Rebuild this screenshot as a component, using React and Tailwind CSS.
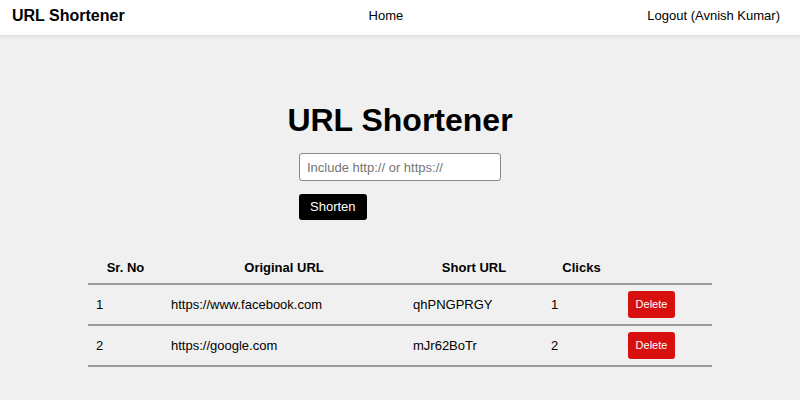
import React from 'react';

const links = [
  { id: 1, original: 'https://www.facebook.com', short: 'qhPNGPRGY', clicks: 1 },
  { id: 2, original: 'https://google.com', short: 'mJr62BoTr', clicks: 2 },
];

const App = () => {
  return (
    <div className="min-h-[400px] bg-[#f0f0f0] text-black font-['Liberation_Sans',Arial,sans-serif]">
      <nav className="h-[35px] bg-white shadow-[0_1px_4px_rgba(0,0,0,0.12)] flex items-center justify-between pl-3 pr-5 pb-1">
        <div className="text-[16px] font-bold">URL Shortener</div>
        <a className="text-[13px] text-black">Home</a>
        <a className="text-[13px] text-black">Logout (Avnish Kumar)</a>
      </nav>

      <main className="flex flex-col items-center">
        <h1 className="mt-[67px] text-[32px] leading-[37px] font-bold">URL Shortener</h1>

        <form className="mt-[14px] w-[202px] flex flex-col items-start" onSubmit={(e) => e.preventDefault()}>
          <input
            type="text"
            placeholder="Include http:// or https://"
            className="w-[202px] h-[28px] px-[7px] bg-white border border-[#8a8a8a] rounded-[3px] text-[13px] placeholder:text-[#757575] outline-none"
          />
          <button className="mt-[13px] h-[26px] px-[11px] bg-black text-white text-[13px] rounded-[3px]">
            Shorten
          </button>
        </form>

        <table className="mt-[33px] w-[624px] border-collapse text-[13px]">
          <thead>
            <tr className="h-[31px] border-b-2 border-[#9a9a9a]">
              <th className="w-[75px] font-bold text-center">Sr. No</th>
              <th className="w-[242px] font-bold text-center">Original URL</th>
              <th className="w-[138px] font-bold text-center">Short URL</th>
              <th className="w-[77px] font-bold text-center">Clicks</th>
              <th className="w-[92px]"></th>
            </tr>
          </thead>
          <tbody>
            {links.map((l) => (
              <tr key={l.id} className="h-[41px] border-b-2 border-[#9a9a9a]">
                <td className="px-2">{l.id}</td>
                <td className="px-2">{l.original}</td>
                <td className="px-2">{l.short}</td>
                <td className="px-2">{l.clicks}</td>
                <td className="px-2">
                  <button className="w-[47px] h-[27px] bg-[#d70f0f] text-white text-[11px] rounded-[3px]">
                    Delete
                  </button>
                </td>
              </tr>
            ))}
          </tbody>
        </table>
      </main>
    </div>
  );
};

export default App;
